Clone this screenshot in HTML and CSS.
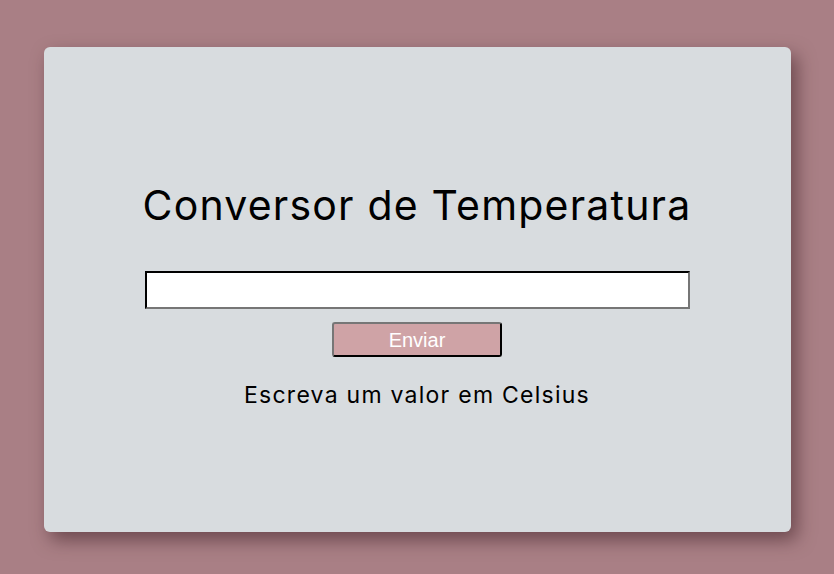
FILE: index.html
```html
<!DOCTYPE html>
<html lang="pt-BR">
<head>
<meta charset="utf-8">
<title>Conversor de Temperatura</title>
<link rel="stylesheet" href="styles.css">
</head>
<body>
  <main class="card">
    <h1 class="title">Conversor de Temperatura</h1>
    <input class="field" type="text">
    <button class="send" type="button">Enviar</button>
    <p class="result">Escreva um valor em Celsius</p>
  </main>
</body>
</html>
```
FILE: styles.css
```css
html, body {
  margin: 0;
  padding: 0;
}
body {
  background: #a97f85;
  height: 574px;
  display: flex;
  justify-content: center;
  padding-top: 47px;
  box-sizing: border-box;
  font-family: "Inter", "Noto Sans", sans-serif;
}
.card {
  width: 747px;
  height: 485px;
  background: #d8dcdf;
  border-radius: 6px;
  box-shadow: 6px 8px 18px rgba(60, 30, 35, 0.55);
  display: flex;
  flex-direction: column;
  align-items: center;
  box-sizing: border-box;
  padding-top: 128px;
}
.title {
  margin: 0 0 36px;
  font-size: 41px;
  font-weight: 400;
  line-height: 60px;
  letter-spacing: 1.2px;
  color: #000;
}
.field {
  width: 545px;
  height: 38px;
  box-sizing: border-box;
  border: 2px inset #767676;
  border-top-color: #1a1a1a;
  border-left-color: #1a1a1a;
  background: #fff;
  margin: 0;
}
.send {
  margin-top: 13px;
  width: 170px;
  height: 35px;
  box-sizing: border-box;
  background: #cfa3a6;
  color: #fff;
  font-family: "Liberation Sans", Arial, sans-serif;
  font-size: 20px;
  border: 2px outset #767676;
  border-right-color: #1a1a1a;
  border-bottom-color: #1a1a1a;
  border-radius: 3px;
  padding: 2px 0 0;
}
.result {
  margin: 22px 0 0;
  font-size: 23px;
  line-height: 33px;
  letter-spacing: 1.25px;
  color: #000;
}
```
